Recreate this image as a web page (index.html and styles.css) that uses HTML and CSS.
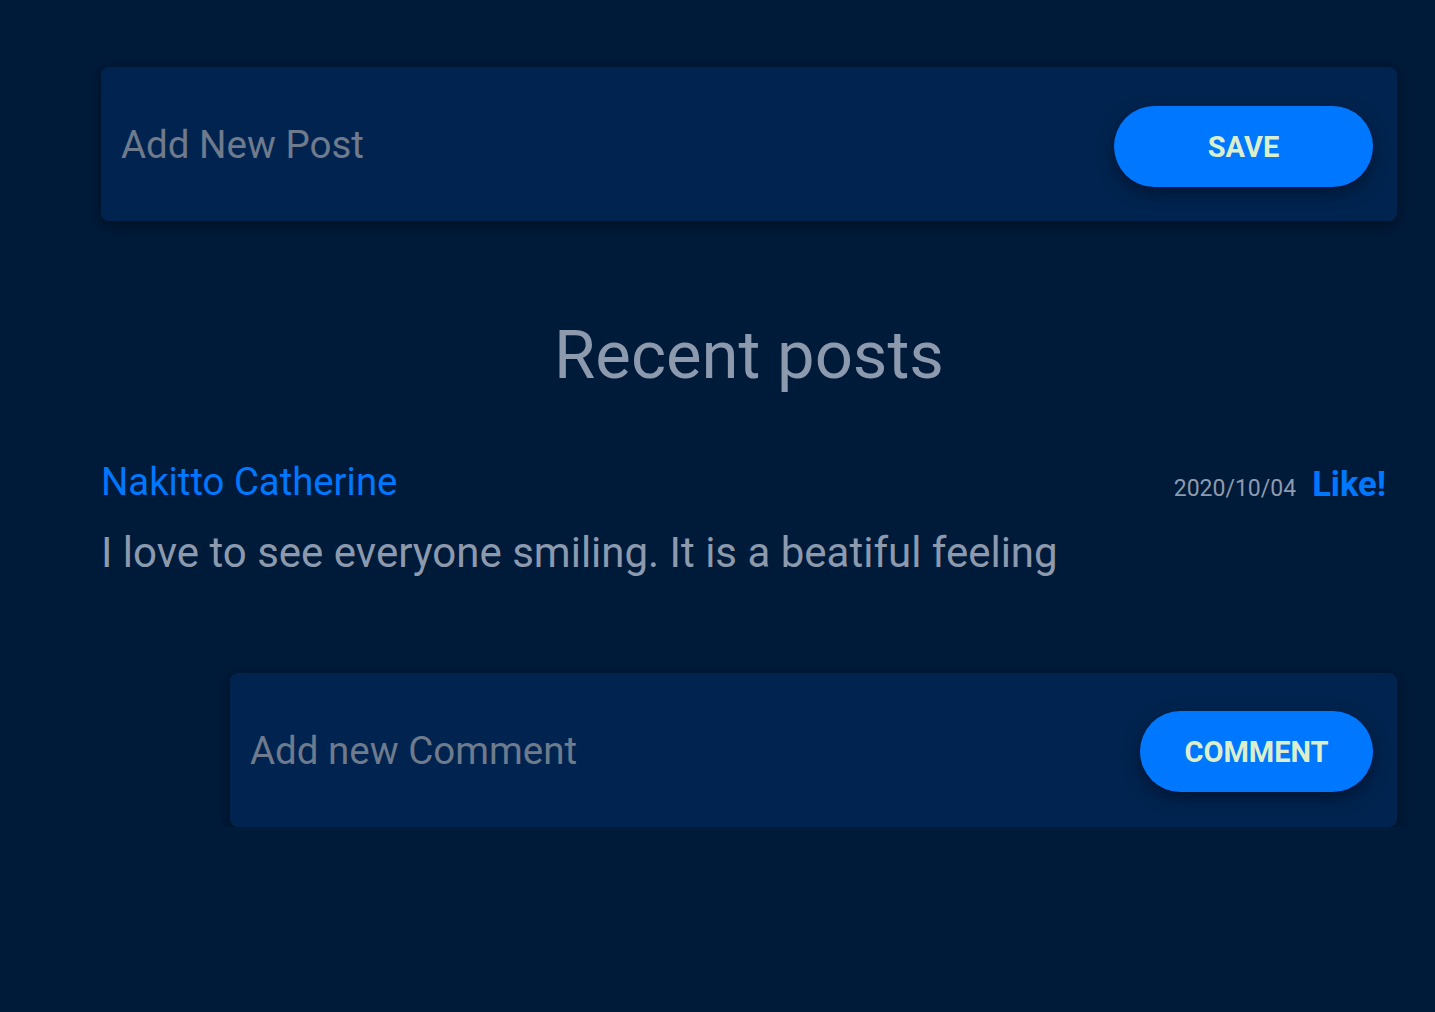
FILE: index.html
```html
<!DOCTYPE html>
<html>
<head>
<meta charset="utf-8">
<link rel="stylesheet" href="styles.css">
</head>
<body>
<main class="page">
  <form class="card card-post">
    <div class="placeholder">Add New Post</div>
    <button class="btn btn-save" type="button">SAVE</button>
  </form>
  <h1 class="title">Recent posts</h1>
  <article class="post">
    <div class="post-head">
      <div class="author">Nakitto Catherine</div>
      <div class="meta">
        <span class="date">2020/10/04</span>
        <span class="like">Like!</span>
      </div>
    </div>
    <p class="body">I love to see everyone smiling. It is a beatiful feeling</p>
  </article>
  <form class="card card-comment">
    <div class="placeholder">Add new Comment</div>
    <button class="btn btn-comment" type="button">COMMENT</button>
  </form>
</main>
</body>
</html>
```
FILE: styles.css
```css
html, body {
  margin: 0;
  padding: 0;
  background: #001b3a;
  font-family: Roboto, "Noto Sans", sans-serif;
}
.page {
  padding: 67px 38px 0 101px;
  display: flex;
  flex-direction: column;
}
.card {
  background: #00244f;
  border-radius: 8px;
  height: 154px;
  box-sizing: border-box;
  display: flex;
  align-items: center;
  justify-content: space-between;
  padding: 0 24px 0 20px;
  box-shadow: 0 4px 14px rgba(0, 8, 20, 0.6);
  margin: 0;
}
.placeholder {
  color: #6f7b8c;
  font-size: 38.5px;
}
.btn {
  border: none;
  background: #0077ff;
  color: #dcefcc;
  font-family: Roboto, sans-serif;
  font-weight: 700;
  font-size: 29px;
  border-radius: 41px;
  height: 81px;
  margin-top: 5px;
  box-shadow: 0 6px 16px rgba(0, 10, 30, 0.55);
}
.btn-save { width: 259px; }
.btn-comment { width: 233px; margin-top: 3px; }
.title {
  text-align: center;
  color: #8d9aae;
  font-weight: 400;
  font-size: 67px;
  margin: 101px 0 0;
  line-height: 1;
}
.post {
  margin-top: 70px;
}
.post-head {
  display: flex;
  justify-content: space-between;
  align-items: baseline;
}
.author {
  color: #0077ff;
  font-size: 38.3px;
}
.meta {
  padding-right: 11px;
  display: flex;
  align-items: baseline;
  gap: 16px;
  position: relative;
  top: 1px;
}
.date {
  color: #8d9aae;
  font-size: 23px;
}
.like {
  color: #0077ff;
  font-weight: 700;
  font-size: 34.5px;
}
.body {
  color: #8d9aae;
  font-size: 42px;
  margin: 24px 0 0;
  line-height: 1.2;
}
.card-comment {
  margin-left: 129px;
  margin-top: 95px;
}
```
